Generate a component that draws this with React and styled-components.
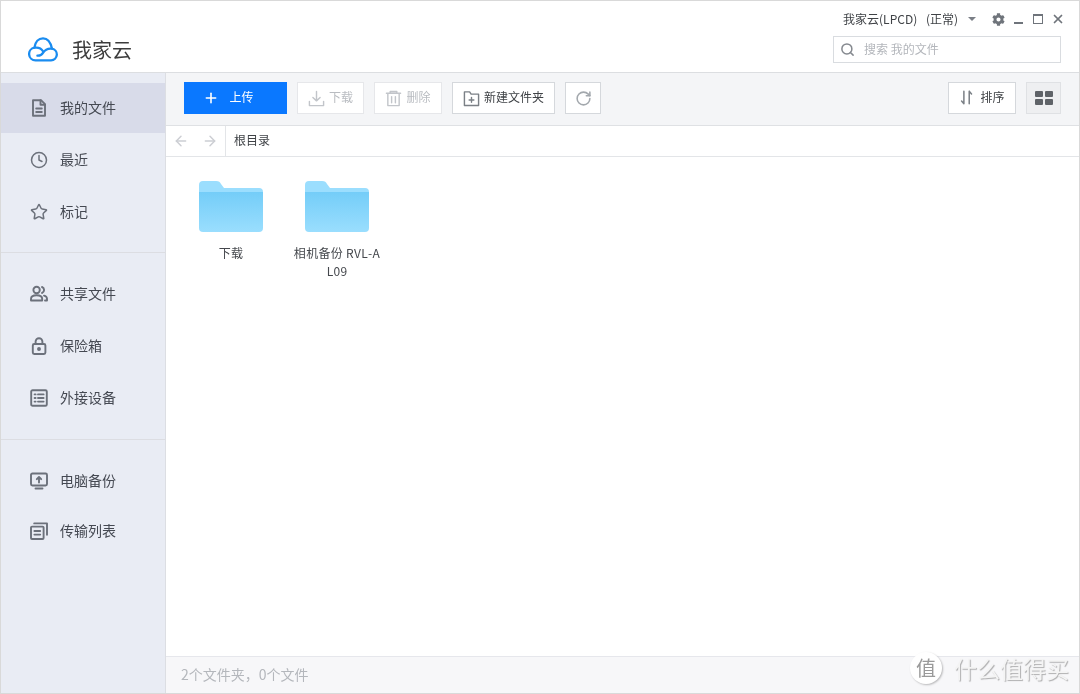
import React from "react";
import styled, { createGlobalStyle } from "styled-components";
import { Clock, Star, Search, Plus, ArrowLeft, ArrowRight, X, RotateCw } from "lucide-react";
import { FaCog } from "react-icons/fa";

const GlobalStyle = createGlobalStyle`
  html, body { margin: 0; padding: 0; background: #fff; }
  * { box-sizing: border-box; }
  body { font-family: "Noto Sans CJK SC", "Noto Sans", sans-serif; }
`;

const Ico = ({ size = 18, sw = 1.9, children }) => (
  <svg width={size} height={size} viewBox="0 0 18 18" fill="none" stroke="currentColor" strokeWidth={sw} strokeLinejoin="round" strokeLinecap="round">
    {children}
  </svg>
);

const DocIcon = () => (
  <Ico><path d="M3 1.2h8l4 4v11.6H3z" /><path d="M10.5 1.2v4.6H15M6.2 9.5h5.6M6.2 13h5.6" /></Ico>
);
const UsersIcon = () => (
  <Ico>
    <circle cx="6.6" cy="5" r="3.2" />
    <path d="M1 15.5v-1.6c0-2.4 2-3.6 5.6-3.6s5.6 1.2 5.6 3.6v1.6z" />
    <path d="M12 2a3.2 3.2 0 0 1 0 6M14 10.6c1.9.5 3 1.6 3 3.2v1.7h-2" />
  </Ico>
);
const LockIcon = () => (
  <Ico>
    <rect x="2.8" y="7" width="12.6" height="10" rx="1.4" />
    <path d="M5.6 7V4.6a3.4 3.4 0 0 1 6.8 0V7" />
    <circle cx="9" cy="12" r="1" fill="currentColor" />
  </Ico>
);
const ListIcon = () => (
  <Ico>
    <rect x="1.2" y="1.2" width="15.6" height="15.6" rx="1.4" />
    <path d="M4.6 5.4h1M4.6 9h1M4.6 12.6h1M8 5.4h5.6M8 9h5.6M8 12.6h5.6" />
  </Ico>
);
const BackupIcon = () => (
  <Ico>
    <rect x="1" y="1.5" width="16" height="12" rx="1.4" />
    <path d="M5.5 16.5h7M9 10.5V5M6.8 7.2 9 5l2.2 2.2" />
  </Ico>
);
const TransferIcon = () => (
  <Ico>
    <rect x="1" y="4.6" width="12.6" height="12.4" rx="1" />
    <path d="M4.2 1.4H17v11.4M4.4 9h5.8M4.4 12.6h5.8" />
  </Ico>
);
const DownloadIcon = () => (
  <Ico size={17} sw={1.5}>
    <path d="M9 1.5v10M5.2 8 9 11.5 12.8 8M1.5 12v4.5h15V12" />
  </Ico>
);
const TrashIcon = () => (
  <Ico size={17} sw={1.5}>
    <path d="M1.5 3.5h15M5.5 3.5V1.5h7v2M3 3.5v13h12v-13M7 7v6.5M11 7v6.5" />
  </Ico>
);
const NewFolderIcon = () => (
  <Ico size={17} sw={1.5}>
    <path d="M1.5 2h5.5l1.6 2.4h7.9v12H1.5zM9 8v5M6.5 10.5h5" />
  </Ico>
);
const SortIcon = () => (
  <Ico size={16} sw={1.7}>
    <path d="M5.5 1.5v14M5.5 15.5l-2.6-3M11.5 15.5v-14M11.5 1.5l2.6 3" />
  </Ico>
);
const CloudLogo = () => (
  <svg width="30" height="25" viewBox="0 0 30 25" fill="none" stroke="#1a8cf0" strokeWidth="2.3" strokeLinecap="round" strokeLinejoin="round">
    <path d="M7.5 23.4h15.6a5.9 5.9 0 0 0 .9-11.7C22.600 5 19.200 1.300 15 1.300 10.600 1.300 7.200 5 6.400 10.700A6.400 6.400 0 0 0 7.500 23.400z" />
    <path d="M6.400 10.700c3.800-.6 7 .8 8.600 3.600" />
    <path d="M24 11.700c-4.600-.6-7.300 1.500-9 4.100-1.300 2-3.200 3-5.600 2.800" />
  </svg>
);
const FolderArt = () => (
  <svg width="64" height="51" viewBox="0 0 64 51">
    <defs>
      <linearGradient id="folderFront" x1="0" y1="0" x2="0" y2="1">
        <stop offset="0" stopColor="#74cdf8" />
        <stop offset="1" stopColor="#9adefe" />
      </linearGradient>
    </defs>
    <path d="M0 4a4 4 0 0 1 4-4h13c3 0 4 1 5 3l3 4h35a4 4 0 0 1 4 4v10H0z" fill="#9bdefe" />
    <path d="M0 11h64v36a4 4 0 0 1-4 4H4a4 4 0 0 1-4-4z" fill="url(#folderFront)" />
  </svg>
);

const Page = styled.div`
  position: relative;
  width: 1080px;
  height: 694px;
  display: flex;
  flex-direction: column;
  border: 1px solid #d9d9d9;
  overflow: hidden;
  background: #fff;
  filter: blur(0.3px);
`;

const TitleBar = styled.header`
  height: 72px;
  flex: none;
  display: flex;
  justify-content: space-between;
  border-bottom: 1px solid #dcdee1;
  background: #fff;
`;

const Brand = styled.div`
  display: flex;
  align-items: center;
  gap: 14px;
  padding: 25px 0 0 27px;
  color: #3c3c3c;
  font-size: 20px;
`;

const TitleRight = styled.div`
  width: 250px;
  padding: 7px 18px 0 0;
  display: flex;
  flex-direction: column;
  align-items: flex-end;
`;

const AccountRow = styled.div`
  display: flex;
  align-items: center;
  height: 22px;
  margin-right: -7px;
  color: #3f4246;
  font-size: 12px;
  white-space: nowrap;
`;

const AccountName = styled.span`
  margin-bottom: 2px;
  word-spacing: 6px;
`;

const Caret = styled.span`
  width: 0;
  height: 0;
  margin: 0 12px 0 10px;
  border: 4px solid transparent;
  border-top: 4px solid #7a7f86;
  border-bottom: 0;
`;

const WinButton = styled.span`
  width: 20px;
  height: 16px;
  display: flex;
  align-items: center;
  justify-content: center;
  color: #6f747b;
`;

const MinBar = styled.i`
  width: 9px;
  height: 2px;
  margin-top: 7px;
  background: #6f747b;
`;

const MaxBox = styled.i`
  width: 10px;
  height: 10px;
  border: 1.5px solid #6f747b;
  border-top-width: 2.5px;
`;

const SearchBox = styled.div`
  width: 228px;
  height: 27px;
  margin-top: 6px;
  padding-left: 6px;
  display: flex;
  align-items: center;
  gap: 9px;
  border: 1px solid #d9dce0;
  color: #b3b6bb;
  font-size: 12px;
  svg { color: #85898f; }
`;

const Label = styled.span`
  margin-bottom: 3px;
`;

const Body = styled.div`
  flex: 1;
  min-height: 0;
  display: flex;
`;

const Sidebar = styled.nav`
  width: 165px;
  flex: none;
  background: #e9ecf4;
  border-right: 1px solid #dcdee3;
`;

const NavGroup = styled.div`
  padding: ${(p) => p.$pad};
  display: flex;
  flex-direction: column;
  gap: ${(p) => p.$gap}px;
  & + & { border-top: 1px solid #dcdde2; }
`;

const NavItem = styled.div`
  height: 50px;
  padding-left: 29px;
  display: flex;
  align-items: center;
  gap: 12px;
  color: #454952;
  font-size: 14px;
  background: ${(p) => (p.$active ? "#d8dbe9" : "transparent")};
  svg { color: #6c717b; flex: none; }
`;

const NavText = styled.span`
  margin-bottom: 2px;
`;

const Main = styled.main`
  flex: 1;
  min-width: 0;
  display: flex;
  flex-direction: column;
`;

const Toolbar = styled.div`
  height: 53px;
  flex: none;
  padding: 9px 18px 0;
  display: flex;
  gap: 10px;
  background: #f4f5f7;
  border-bottom: 1px solid #dfe1e4;
`;

const Button = styled.button`
  width: ${(p) => p.$w}px;
  height: 32px;
  padding: 0;
  display: flex;
  align-items: center;
  justify-content: center;
  gap: ${(p) => p.$gap || 4}px;
  font: inherit;
  font-size: 12px;
  color: ${(p) => (p.$off ? "#b9bcc1" : "#3f4246")};
  background: #fff;
  border: 1px solid ${(p) => (p.$off ? "#e6e7ea" : "#d5d8dc")};
  svg { color: ${(p) => (p.$off ? "#c2c5ca" : "#7b8086")}; flex: none; }
`;

const PrimaryButton = styled(Button)`
  padding-right: 14px;
  color: #fff;
  background: #0a78ff;
  border-color: #0a78ff;
  svg { color: #fff; }
`;

const RefreshButton = styled(Button)`
  svg { color: #a3a8ad; }
`;

const ViewButton = styled(Button)`
  background: #eeeff1;
  border-color: #dfe1e4;
`;

const Spacer = styled.div`
  flex: 1;
`;

const GridGlyph = styled.span`
  display: grid;
  grid-template-columns: 8px 8px;
  grid-auto-rows: 6px;
  gap: 2px;
  i { background: #5f6368; border-radius: 1px; }
`;

const Crumbs = styled.div`
  height: 31px;
  flex: none;
  display: flex;
  align-items: center;
  border-bottom: 1px solid #e3e5e8;
  font-size: 12px;
  color: #3f4246;
`;

const CrumbNav = styled.div`
  width: 60px;
  height: 100%;
  padding-left: 7px;
  display: flex;
  align-items: center;
  gap: 13px;
  color: #ccced3;
  border-right: 1px solid #e3e5e8;
  margin-right: 8px;
`;

const Files = styled.section`
  flex: 1;
  padding: 24px 0 0 12px;
  display: flex;
  align-items: flex-start;
`;

const FileTile = styled.div`
  width: 106px;
  display: flex;
  flex-direction: column;
  align-items: center;
`;

const FileName = styled.div`
  width: 88px;
  margin-top: 12px;
  font-size: 12px;
  line-height: 18px;
  letter-spacing: 0.3px;
  color: #44474c;
  text-align: center;
  word-break: break-all;
`;

const StatusBar = styled.footer`
  height: 37px;
  flex: none;
  padding: 0 0 2px 15px;
  display: flex;
  align-items: center;
  font-size: 14px;
  color: #b4b7bc;
  background: #f7f7f9;
  border-top: 1px solid #e6e7ec;
`;

const Watermark = styled.div`
  position: absolute;
  right: 10px;
  bottom: 9px;
  display: flex;
  align-items: center;
  gap: 12px;
  color: #f4f4f4;
  font-size: 23px;
  line-height: 30px;
  text-shadow: 1px 1px 1px rgba(0, 0, 0, 0.3);
`;

const WatermarkSeal = styled.span`
  width: 32px;
  height: 32px;
  display: flex;
  align-items: center;
  justify-content: center;
  border-radius: 50%;
  font-size: 20px;
  color: #9a9a9a;
  text-shadow: none;
  background: #fff;
  box-shadow: 1px 1px 2px rgba(0, 0, 0, 0.25);
`;

export default function App() {
  return (
    <>
      <GlobalStyle />
      <Page>
        <TitleBar>
          <Brand>
            <CloudLogo />
            <span>我家云</span>
          </Brand>
          <TitleRight>
            <AccountRow>
              <AccountName>我家云(LPCD) (正常)</AccountName>
              <Caret />
              <WinButton><FaCog size={13} /></WinButton>
              <WinButton><MinBar /></WinButton>
              <WinButton><MaxBox /></WinButton>
              <WinButton><X size={14} strokeWidth={3} /></WinButton>
            </AccountRow>
            <SearchBox>
              <Search size={15} strokeWidth={2.4} />
              <Label>搜索 我的文件</Label>
            </SearchBox>
          </TitleRight>
        </TitleBar>
        <Body>
          <Sidebar>
            <NavGroup $pad="10px 0 15px" $gap={2}>
              <NavItem $active><DocIcon /><NavText>我的文件</NavText></NavItem>
              <NavItem><Clock size={18} strokeWidth={2} /><NavText>最近</NavText></NavItem>
              <NavItem><Star size={18} strokeWidth={2} /><NavText>标记</NavText></NavItem>
            </NavGroup>
            <NavGroup $pad="16px 0" $gap={2}>
              <NavItem><UsersIcon /><NavText>共享文件</NavText></NavItem>
              <NavItem><LockIcon /><NavText>保险箱</NavText></NavItem>
              <NavItem><ListIcon /><NavText>外接设备</NavText></NavItem>
            </NavGroup>
            <NavGroup $pad="16px 0" $gap={0}>
              <NavItem><BackupIcon /><NavText>电脑备份</NavText></NavItem>
              <NavItem><TransferIcon /><NavText>传输列表</NavText></NavItem>
            </NavGroup>
          </Sidebar>
          <Main>
            <Toolbar>
              <PrimaryButton $w={103} $gap={10}><Plus size={16} strokeWidth={2.4} /><Label>上传</Label></PrimaryButton>
              <Button $w={67} $off><DownloadIcon /><Label>下载</Label></Button>
              <Button $w={68} $off><TrashIcon /><Label>删除</Label></Button>
              <Button $w={103}><NewFolderIcon /><Label>新建文件夹</Label></Button>
              <RefreshButton $w={36}><RotateCw size={17} strokeWidth={2.2} /></RefreshButton>
              <Spacer />
              <Button $w={68} $gap={5}><SortIcon /><Label>排序</Label></Button>
              <ViewButton $w={35}>
                <GridGlyph><i /><i /><i /><i /></GridGlyph>
              </ViewButton>
            </Toolbar>
            <Crumbs>
              <CrumbNav>
                <ArrowLeft size={16} strokeWidth={2.2} />
                <ArrowRight size={16} strokeWidth={2.2} />
              </CrumbNav>
              <Label>根目录</Label>
            </Crumbs>
            <Files>
              <FileTile>
                <FolderArt />
                <FileName>下载</FileName>
              </FileTile>
              <FileTile>
                <FolderArt />
                <FileName>相机备份 RVL-AL09</FileName>
              </FileTile>
            </Files>
            <StatusBar>2个文件夹，0个文件</StatusBar>
          </Main>
        </Body>
        <Watermark>
          <WatermarkSeal>值</WatermarkSeal>
          <span>什么值得买</span>
        </Watermark>
      </Page>
    </>
  );
}
